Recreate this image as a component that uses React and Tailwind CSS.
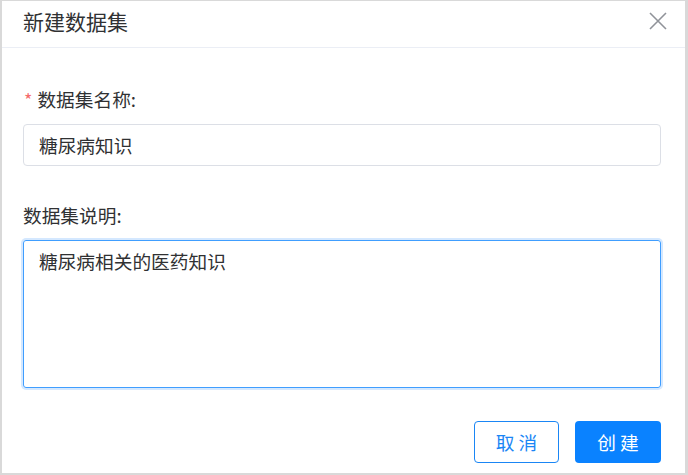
export default function App() {
  const font = { fontFamily: '"Noto Sans CJK SC", "Noto Sans", sans-serif' };
  return (
    <div
      className="w-[688px] h-[475px] bg-[#d9d9d9] pl-[2px] pt-[1px] pr-[3px] pb-[2px] box-border"
      style={font}
    >
      <div className="w-full h-full bg-white flex flex-col">
        <div className="h-[47px] border-b border-[#ebeef5] flex items-center justify-between pl-[21px] pr-[18px] shrink-0">
          <div className="text-[21px] text-[#303133] leading-none -mt-[5px]">新建数据集</div>
          <svg width="18" height="18" viewBox="0 0 18 18" className="-mt-[6px]">
            <path d="M1 1 L17 17 M17 1 L1 17" stroke="#909399" strokeWidth="1.6" fill="none" />
          </svg>
        </div>
        <div className="flex flex-col pl-[21px] pr-[24px]">
          <div className="mt-[40px] h-[22px] flex items-center text-[18.7px] text-[#303133] leading-none">
            <span className="text-[#f56c6c] mr-[5px] text-[18px] pl-[1px]">*</span>
            <span>数据集名称:</span>
          </div>
          <div className="mt-[14px] h-[42px] border border-[#dcdfe6] rounded-[4px] flex items-center px-[15px] text-[18.7px] text-[#303133]">
            糖尿病知识
          </div>
          <div className="mt-[38px] h-[22px] flex items-center text-[18.7px] text-[#303133] leading-none">
            数据集说明:
          </div>
          <div className="mt-[14px] h-[148px] border border-[#409eff] rounded-[3px] shadow-[0_0_0_2px_#d4e8ff] px-[15px] pt-[8px] text-[18.7px] text-[#303133] leading-[24px]">
            糖尿病相关的医药知识
          </div>
          <div className="mt-[33px] flex justify-end gap-[16px]">
            <button className="w-[85px] h-[42px] border border-[#1a86f5] rounded-[4px] text-[#1a86f5] text-[18.7px] tracking-[4px] pl-[4px] bg-white">
              取消
            </button>
            <button className="w-[86px] h-[42px] rounded-[4px] bg-[#0a82ff] text-white text-[18.7px] tracking-[4px] pl-[4px]">
              创建
            </button>
          </div>
        </div>
      </div>
    </div>
  );
}
